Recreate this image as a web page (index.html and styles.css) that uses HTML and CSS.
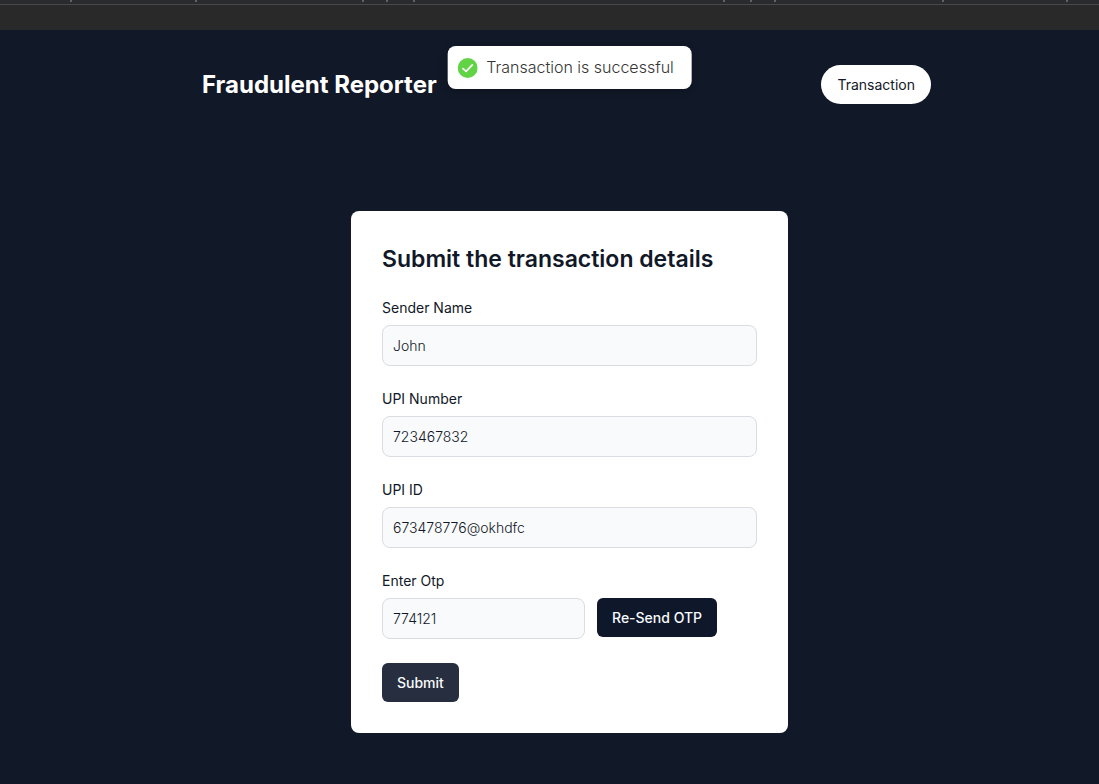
FILE: index.html
```html
<!DOCTYPE html>
<html lang="en">
<head>
<meta charset="utf-8">
<meta name="viewport" content="width=device-width, initial-scale=1">
<title>Fraudulent Reporter</title>
<link rel="stylesheet" href="styles.css">
</head>
<body>
<div class="chrome">
  <svg class="chrome-marks" width="1099" height="4" viewBox="0 0 1099 4" fill="#606163" aria-hidden="true">
    <path d="M70 0h2v2h-2zM195 0h2v2h-2zM362 0h2v2h-2zM386 0h2v2h-2zM413 0h2v2h-2zM723 0h2v2h-2zM750 0h2v2h-2zM774 0h2v2h-2zM942 0h2v2h-2zM1066 0h2v2h-2z"/>
  </svg>
</div>
<div class="page">
  <div class="toast" role="status">
    <svg width="20" height="20" viewBox="0 0 20 20" aria-hidden="true">
      <circle cx="10" cy="10" r="10" fill="#61d345"/>
      <path d="M5.3 10.6 8.4 13.3 14.6 6.8" fill="none" stroke="#fff" stroke-width="1.7" stroke-linecap="round" stroke-linejoin="round"/>
    </svg>
    <span>Transaction is successful</span>
  </div>
  <header class="header">
    <h1 class="brand">Fraudulent Reporter</h1>
    <button class="nav-button" type="button">Transaction</button>
  </header>
  <main class="main">
    <form class="card">
      <h2 class="card-title">Submit the transaction details</h2>
      <div class="field">
        <label for="sender">Sender Name</label>
        <input class="input" id="sender" type="text" value="John">
      </div>
      <div class="field">
        <label for="upi-number">UPI Number</label>
        <input class="input" id="upi-number" type="text" value="723467832">
      </div>
      <div class="field">
        <label for="upi-id">UPI ID</label>
        <input class="input" id="upi-id" type="text" value="673478776@okhdfc">
      </div>
      <div class="field">
        <label for="otp">Enter Otp</label>
        <div class="otp-row">
          <input class="input otp-input" id="otp" type="text" value="774121">
          <button class="button" type="button">Re-Send OTP</button>
        </div>
      </div>
      <div class="actions">
        <button class="button button-submit" type="submit">Submit</button>
      </div>
    </form>
  </main>
</div>
</body>
</html>
```
FILE: styles.css
```css
* { box-sizing: border-box; }

body {
  margin: 0;
  min-height: 100vh;
  display: flex;
  flex-direction: column;
  overflow-x: hidden;
  background: #111827;
  color: #111827;
  font: 400 14px/20px Inter, "Liberation Sans", sans-serif;
}

h1, h2 { margin: 0; }

button, input { font: inherit; }

.chrome {
  height: 30px;
  overflow: hidden;
  background: linear-gradient(#292a2d 4px, #48494b 4px, #48494b 5px, #292929 5px);
}

.chrome-marks { display: block; }

.page {
  position: relative;
  flex: 1;
  padding: 35px 0 48px 40px;
}

.toast {
  position: absolute;
  top: 16px;
  left: calc(50% + 20px);
  transform: translateX(-50%);
  display: flex;
  align-items: center;
  gap: 9px;
  height: 43px;
  padding: 0 18px 0 10px;
  border-radius: 8px;
  background: #fff;
  box-shadow: 0 3px 10px rgba(0, 0, 0, 0.1), 0 3px 3px rgba(0, 0, 0, 0.05);
  color: #363636;
  font-size: 16px;
  font-weight: 300;
  line-height: 21px;
  white-space: nowrap;
}

.header {
  display: flex;
  align-items: center;
  justify-content: space-between;
  max-width: 735px;
  margin: 0 auto;
  padding-right: 6px;
}

.brand {
  color: #fff;
  font-size: 24px;
  font-weight: 700;
  line-height: 32px;
}

.nav-button {
  height: 39px;
  padding: 0 16px;
  border: 0;
  border-radius: 20px;
  background: #fff;
  color: #111827;
}

.main { padding-top: 107px; }

.card {
  display: flex;
  flex-direction: column;
  gap: 23px;
  max-width: 437px;
  margin: 0 auto;
  padding: 32px 31px 31px;
  border-radius: 8px;
  background: #fff;
}

.card-title {
  font-size: 23px;
  font-weight: 600;
  line-height: 32px;
}

.field {
  display: flex;
  flex-direction: column;
  gap: 7px;
}

.input {
  width: 100%;
  height: 41px;
  padding: 0 10px;
  border: 1px solid #d9dce1;
  border-radius: 8px;
  background: #f9fafb;
  color: #111827;
  font-weight: 300;
}

.otp-row {
  display: flex;
  align-items: flex-start;
  gap: 12px;
}

.otp-input { width: 203px; }

.button {
  height: 39px;
  padding: 0 15px;
  border: 0;
  border-radius: 6px;
  background: #0f172a;
  color: #f8fafc;
  font-weight: 500;
}

.actions { padding-top: 1px; }

.button-submit { display: block; background: #272e3f; }
```
